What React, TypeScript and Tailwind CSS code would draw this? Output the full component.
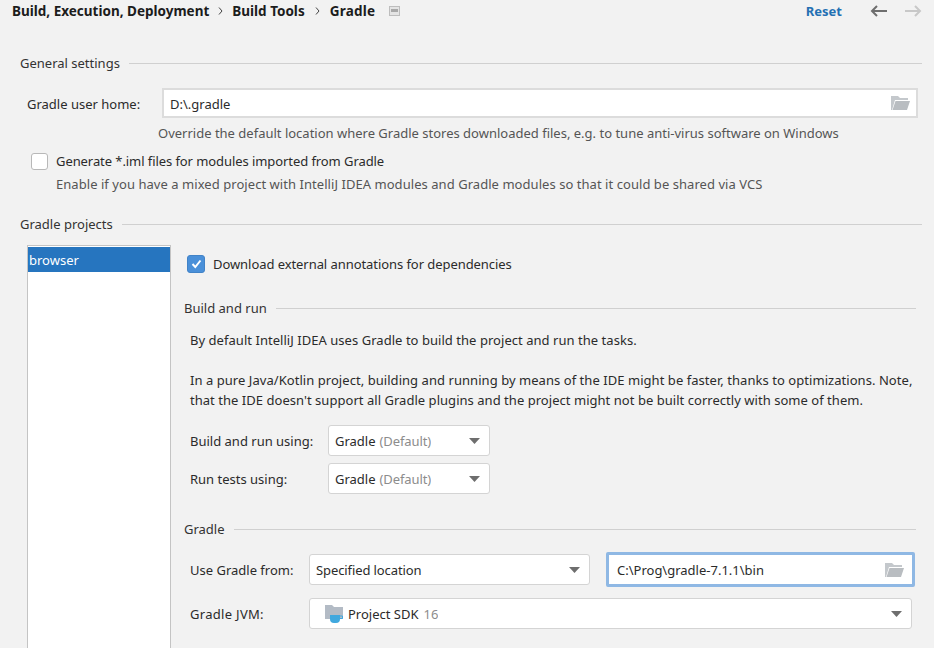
import React from 'react';

const Folder: React.FC = () => (
    <svg width="19" height="14" viewBox="0 0 19 14" className="shrink-0">
        <path d="M0 0h7l2 2h8v2H4L1 14H0z" fill="#c4c8cc" />
        <path d="M4.5 5H19l-3 9H1.5z" fill="#b9bdc1" />
    </svg>
);

const Arrow: React.FC = () => (
    <svg width="11" height="6" viewBox="0 0 11 6" className="shrink-0">
        <path d="M0 0h11L5.5 6z" fill="#6e6e6e" />
    </svg>
);

const SectionTitle: React.FC<{ title: string; className?: string }> = ({ title, className }) => (
    <div className={`flex items-center gap-[9px] h-[20px] ${className ?? ''}`}>
        <span className="text-[#333]">{title}</span>
        <div className="flex-1 h-px bg-[#d0d0d0]" />
    </div>
);

const Combo: React.FC<{ className: string; children: React.ReactNode }> = ({ className, children }) => (
    <div className={`flex items-center justify-between h-[31px] bg-white border border-[#d4d4d4] rounded-[3px] ${className}`}>
        <span className="flex items-center truncate">{children}</span>
        <Arrow />
    </div>
);

const App: React.FC = () => {
    return (
        <div className="w-[934px] h-[648px] overflow-hidden bg-[#f2f2f2] text-[13px] leading-[20px] text-[#2b2b2b] font-['Noto_Sans','Open_Sans',sans-serif]">
            <div className="flex items-center h-[22px] pl-[12px] pr-[12px] text-[#1c1c1c] font-bold">
                <span className="text-[13.5px]">Build, Execution, Deployment</span>
                <svg width="5" height="8" viewBox="0 0 5 8" className="mx-[9px]"><path d="M1 .5 4 4 1 7.5" fill="none" stroke="#444" /></svg>
                <span className="text-[13.5px]">Build Tools</span>
                <svg width="5" height="8" viewBox="0 0 5 8" className="mx-[10px]"><path d="M1 .5 4 4 1 7.5" fill="none" stroke="#444" /></svg>
                <span className="text-[13.5px] tracking-[0.25px]">Gradle</span>
                <svg width="11" height="10" viewBox="0 0 11 10" className="ml-[14px]">
                    <rect x=".5" y=".5" width="10" height="9" fill="#e4e4e4" stroke="#bdbdbd" />
                    <rect x="2" y="3" width="7" height="3" fill="#a8a8a8" />
                </svg>
                <span className="ml-auto text-[#2470b3]">Reset</span>
                <svg width="17" height="12" viewBox="0 0 17 12" className="ml-[28px]"><path d="M17 6H2M7 1 2 6l5 5" fill="none" stroke="#6e6e6e" strokeWidth="2" /></svg>
                <svg width="17" height="12" viewBox="0 0 17 12" className="ml-[18px]"><path d="M0 6h15M10 1l5 5-5 5" fill="none" stroke="#c8c8c8" strokeWidth="2" /></svg>
            </div>

            <div className="pl-[20px] pr-[12px] pt-[31px]">
                <SectionTitle title="General settings" />

                <div className="flex items-center mt-[15px] pl-[7px] pr-[4px]">
                    <span className="w-[135px] pt-px">Gradle user home:</span>
                    <div className="flex-1 flex items-center justify-between h-[30px] bg-white border-2 border-[#dcdcdc] pl-[6px] pr-[6px]">
                        <span className="pt-px">D:\.gradle</span>
                        <Folder />
                    </div>
                </div>
                <div className="mt-[5px] ml-[138px] text-[#555]">Override the default location where Gradle stores downloaded files, e.g. to tune anti-virus software on Windows</div>

                <div className="flex items-center mt-[8px] ml-[11px] gap-[8px]">
                    <div className="w-[17px] h-[17px] bg-white border border-[#b8b8b8] rounded-[3px]" />
                    <span className="tracking-[-0.075px]">Generate *.iml files for modules imported from Gradle</span>
                </div>
                <div className="mt-[3px] ml-[36px] text-[#555] tracking-[0.05px]">Enable if you have a mixed project with IntelliJ IDEA modules and Gradle modules so that it could be shared via VCS</div>

                <SectionTitle title="Gradle projects" className="mt-[20px]" />

                <div className="flex mt-[11px] pl-[7px]">
                    <div className="w-[144px] h-[420px] shrink-0 bg-white border border-[#c4c4c4] pt-px">
                        <div className="h-[25px] leading-[27px] pl-px bg-[#2675bf] text-white">browser</div>
                    </div>

                    <div className="flex-1 pl-[13px] pr-[6px]">
                        <div className="flex items-center mt-[8px] ml-[3px] gap-[8px]">
                            <div className="flex items-center justify-center w-[18px] h-[18px] rounded-[3px] bg-[#4a90d9] border border-[#4283c7]">
                                <svg width="11" height="10" viewBox="0 0 11 10"><path d="M1.5 5 4.3 8 9.5 1.5" fill="none" stroke="#fff" strokeWidth="2" /></svg>
                            </div>
                            <span className="pt-px tracking-[-0.065px]">Download external annotations for dependencies</span>
                        </div>

                        <SectionTitle title="Build and run" className="mt-[24px]" />
                        <div className="mt-[12px] ml-[6px] tracking-[0.04px]">By default IntelliJ IDEA uses Gradle to build the project and run the tasks.</div>
                        <div className="mt-[20px] ml-[6px] whitespace-nowrap tracking-[0.05px]">In a pure Java/Kotlin project, building and running by means of the IDE might be faster, thanks to optimizations. Note,</div>
                        <div className="ml-[6px] whitespace-nowrap tracking-[0.035px]">that the IDE doesn't support all Gradle plugins and the project might not be built correctly with some of them.</div>

                        <div className="flex items-center mt-[15px] ml-[6px]">
                            <span className="w-[138px]">Build and run using:</span>
                            <Combo className="w-[162px] pl-[6px] pr-[9px]">Gradle<span className="ml-[4px] text-[#8c8c8c] tracking-[-0.1px]">(Default)</span></Combo>
                        </div>
                        <div className="flex items-center mt-[7px] ml-[6px]">
                            <span className="w-[138px]">Run tests using:</span>
                            <Combo className="w-[162px] pl-[6px] pr-[9px]">Gradle<span className="ml-[4px] text-[#8c8c8c] tracking-[-0.1px]">(Default)</span></Combo>
                        </div>

                        <SectionTitle title="Gradle" className="mt-[25px]" />

                        <div className="flex items-center mt-[13px] ml-[6px]">
                            <span className="w-[119px]">Use Gradle from:</span>
                            <Combo className="w-[281px] pl-[6px] pr-[9px] tracking-[-0.1px]">Specified location</Combo>
                            <div className="flex items-center justify-between w-[309px] h-[35px] ml-[16px] bg-white border-[3px] border-[#8fb8e4] rounded-[2px] pl-[8px] pr-[8px]">
                                <span>C:\Prog\gradle-7.1.1\bin</span>
                                <Folder />
                            </div>
                        </div>
                        <div className="flex items-center mt-[11px] ml-[6px]">
                            <span className="w-[119px] tracking-[0.3px]">Gradle JVM:</span>
                            <Combo className="w-[603px] pl-[15px] pr-[9px]">
                                <svg width="19" height="18" viewBox="0 0 19 18" className="mr-[4px]">
                                    <path d="M0 0h7l2 2h9v12H0z" fill="#b3bbc5" />
                                    <path d="M5 10h10v4a4 4 0 0 1-4 4H9a4 4 0 0 1-4-4z" fill="#40a8de" />
                                    <path d="M15 11h2.5v2.5H15" fill="none" stroke="#40a8de" />
                                </svg>
                                Project SDK<span className="ml-[5px] text-[#8c8c8c]">16</span>
                            </Combo>
                        </div>
                    </div>
                </div>
            </div>
        </div>
    );
};

export default App;
